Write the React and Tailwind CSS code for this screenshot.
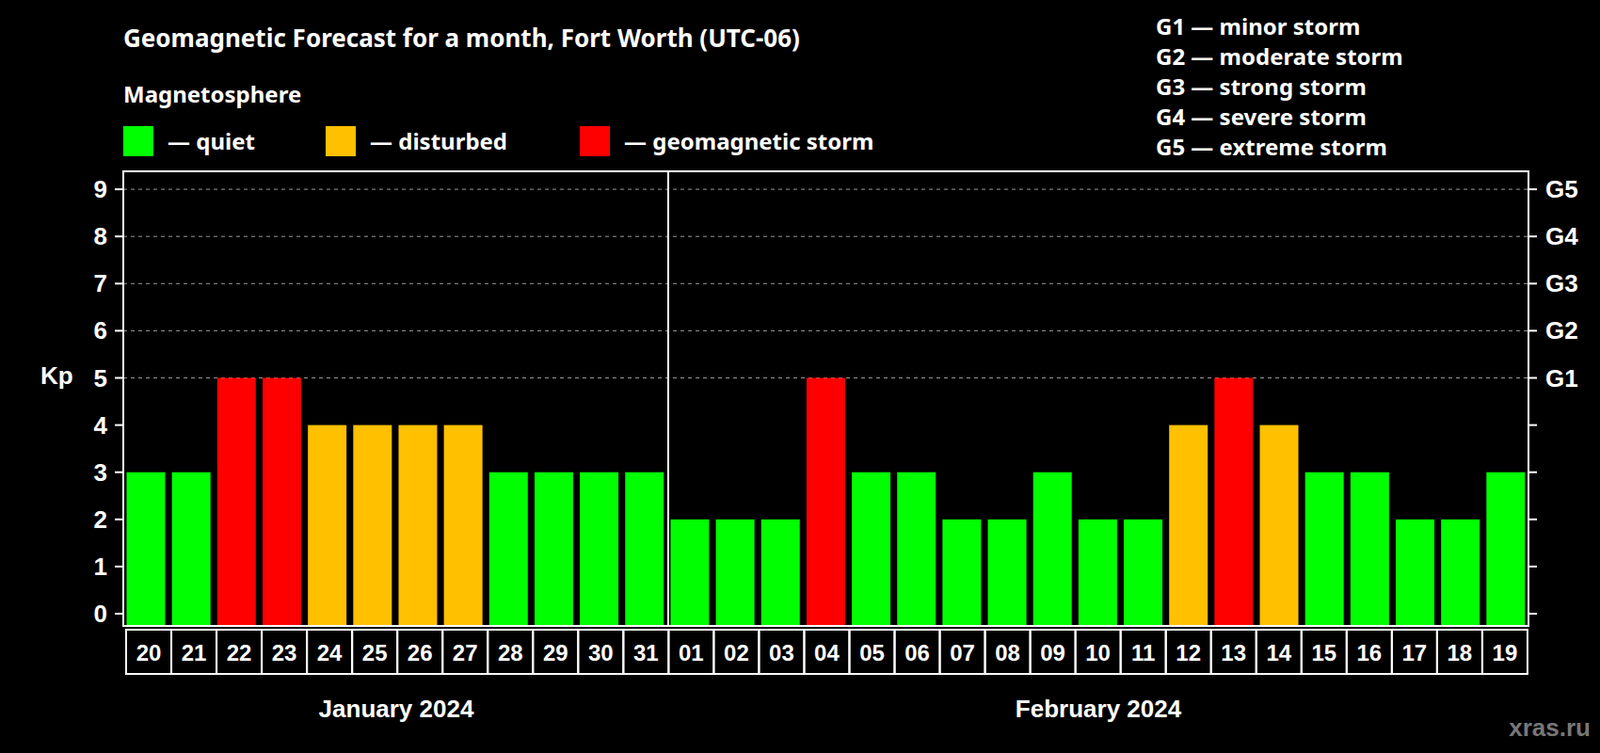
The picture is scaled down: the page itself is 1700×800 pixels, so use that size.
export default function App() {
  const data = [3,3,5,5,4,4,4,4,3,3,3,3,2,2,2,5,3,3,2,2,3,2,2,4,5,4,3,3,2,2,3];
  const days = ["20","21","22","23","24","25","26","27","28","29","30","31","01","02","03","04","05","06","07","08","09","10","11","12","13","14","15","16","17","18","19"];
  const col = (k) => (k >= 5 ? "#ff0000" : k === 4 ? "#ffc000" : "#00ff00");
  const L = 131, R = 1624, T = 182, B = 665, P = (R - L) / 31;
  const y = (k) => 652 - k * 50.1;
  const f = { fontFamily: "'Liberation Sans', Arial, sans-serif", fontWeight: 700 };
  return (
    <div className="w-[1700px] h-[800px] bg-black text-white font-['Liberation_Sans',Arial,sans-serif] font-bold overflow-hidden">
      <div className="flex h-[170px]">
        <div className="w-[1228px] pl-[131px] pt-[25px]">
          <div className="text-[26px] leading-[30px]">Geomagnetic Forecast for a month, Fort Worth (UTC-06)</div>
          <div className="mt-[31px] text-[24px] leading-[28px]">Magnetosphere</div>
          <div className="mt-[20px] flex items-center h-[32px] text-[24px]">
            <div className="w-[215px] flex items-center gap-[15px]"><span className="w-[32px] h-[32px] bg-[#00ff00]"></span>— quiet</div>
            <div className="w-[270px] flex items-center gap-[15px]"><span className="w-[32px] h-[32px] bg-[#ffc000]"></span>— disturbed</div>
            <div className="flex items-center gap-[15px]"><span className="w-[32px] h-[32px] bg-[#ff0000]"></span>— geomagnetic storm</div>
          </div>
        </div>
        <div className="pt-[12px] text-[24px] leading-[32px]">
          <div>G1 — minor storm</div>
          <div>G2 — moderate storm</div>
          <div>G3 — strong storm</div>
          <div>G4 — severe storm</div>
          <div>G5 — extreme storm</div>
        </div>
      </div>
      <svg width="1700" height="630" viewBox="0 170 1700 630" style={f}>
        {[5,6,7,8,9].map((k) => (
          <line key={k} x1={L} x2={R} y1={y(k)} y2={y(k)} stroke="#999" strokeWidth="1" strokeDasharray="4 4" />
        ))}
        {data.map((k, i) => (
          <rect key={i} x={L + i * P + 3.5} y={y(k)} width={41} height={B - y(k)} fill={col(k)} />
        ))}
        <rect x={L} y={T} width={R - L} height={B - T} fill="none" stroke="#fff" strokeWidth="2" />
        <line x1="710" x2="710" y1={T} y2={B} stroke="#fff" strokeWidth="2" />
        {[0,1,2,3,4,5,6,7,8,9].map((k) => (
          <g key={k}>
            <line x1="122" x2={L} y1={y(k)} y2={y(k)} stroke="#fff" strokeWidth="2" />
            <line x1={R} x2="1633" y1={y(k)} y2={y(k)} stroke="#fff" strokeWidth="2" />
            <text x="114" y={y(k)} textAnchor="end" dominantBaseline="central" fill="#fff" fontSize="26">{k}</text>
          </g>
        ))}
        {[5,6,7,8,9].map((k) => (
          <text key={k} x="1642" y={y(k)} dominantBaseline="central" fill="#fff" fontSize="26">G{k - 4}</text>
        ))}
        <text x="43" y="399" dominantBaseline="central" fill="#fff" fontSize="26">Kp</text>
        {days.map((d, i) => (
          <g key={i}>
            <rect x={134 + i * 48.03} y="669" width="48.03" height="47" fill="none" stroke="#fff" strokeWidth="2" />
            <text x={134 + i * 48.03 + 24} y="693" textAnchor="middle" dominantBaseline="central" fill="#fff" fontSize="24">{d}</text>
          </g>
        ))}
        <text x="421" y="753" textAnchor="middle" dominantBaseline="central" fill="#fff" fontSize="26">January 2024</text>
        <text x="1167" y="753" textAnchor="middle" dominantBaseline="central" fill="#fff" fontSize="26">February 2024</text>
        <text x="1690" y="773" textAnchor="end" dominantBaseline="central" fill="#777" fontSize="26">xras.ru</text>
      </svg>
    </div>
  );
}
